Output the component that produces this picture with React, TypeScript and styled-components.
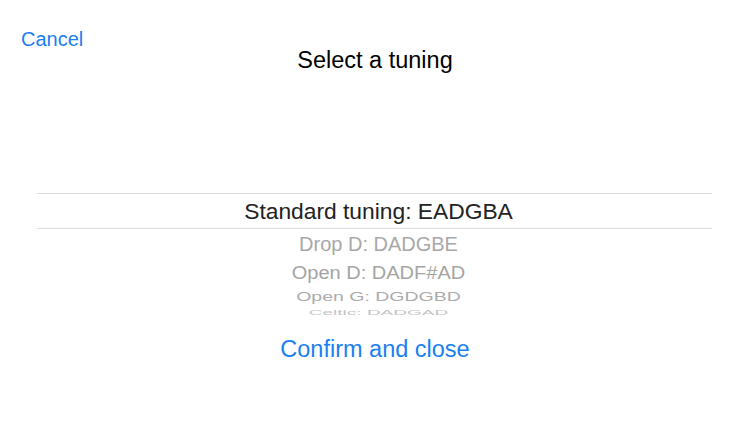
import React from "react";
import styled, { createGlobalStyle } from "styled-components";

const Global = createGlobalStyle`
  html, body { margin: 0; padding: 0; background: #ffffff; }
  body { font-family: "Liberation Sans", Arial, sans-serif; }
`;

const Page = styled.div`
  width: 750px;
  height: 422px;
  display: flex;
  flex-direction: column;
  background: #ffffff;
  overflow: hidden;
`;

const TopBar = styled.div`
  display: flex;
  padding: 29px 21px 0;
`;

const TextButton = styled.button<{ $size: number; $lh: number }>`
  border: none;
  background: none;
  padding: 0;
  margin: 0;
  color: #1a7ff0;
  font-family: "Liberation Sans", Arial, sans-serif;
  font-size: ${(p) => p.$size}px;
  line-height: ${(p) => p.$lh}px;
  cursor: pointer;
`;

const Title = styled.h1`
  margin: 0;
  text-align: center;
  font-weight: 400;
  font-size: 23.5px;
  line-height: 22px;
  color: #000000;
`;

const Picker = styled.div`
  margin: 122px 38px 0 37px;
  display: flex;
  flex-direction: column;
`;

const Band = styled.div`
  border-top: 1px solid #dcdcdc;
  border-bottom: 1px solid #dcdcdc;
  height: 34px;
  padding-left: 8px;
  display: flex;
  align-items: center;
  justify-content: center;
`;

const Selected = styled.span`
  font-size: 22.8px;
  color: #222222;
  line-height: 34px;
`;

const Row = styled.div<{ $h: number }>`
  height: ${(p) => p.$h}px;
  padding-left: 8px;
  display: flex;
  align-items: center;
  justify-content: center;
`;

const RowText = styled.span<{ $scale: number; $color: string; $size: number }>`
  display: inline-block;
  font-size: ${(p) => p.$size}px;
  line-height: 22px;
  color: ${(p) => p.$color};
  transform: scaleY(${(p) => p.$scale});
  white-space: nowrap;
`;

const Footer = styled.div`
  display: flex;
  justify-content: center;
  margin-top: 18px;
`;

const rows = [
  { label: "Drop D: DADGBE", h: 30, scale: 1.03, color: "#a8a8a8", size: 20 },
  { label: "Open D: DADF#AD", h: 28, scale: 0.88, color: "#a4a4a4", size: 20 },
  { label: "Open G: DGDGBD", h: 20, scale: 0.62, color: "#ababab", size: 19.5 },
  { label: "Celtic: DADGAD", h: 12, scale: 0.4, color: "#c4c4c4", size: 19 },
];

export default function App() {
  return (
    <>
      <Global />
      <Page>
        <TopBar>
          <TextButton $size={20} $lh={20}>Cancel</TextButton>
        </TopBar>
        <Title>Select a tuning</Title>
        <Picker>
          <Band>
            <Selected>Standard tuning: EADGBA</Selected>
          </Band>
          {rows.map((r) => (
            <Row key={r.label} $h={r.h}>
              <RowText $scale={r.scale} $color={r.color} $size={r.size}>
                {r.label}
              </RowText>
            </Row>
          ))}
        </Picker>
        <Footer>
          <TextButton $size={23.5} $lh={24}>Confirm and close</TextButton>
        </Footer>
      </Page>
    </>
  );
}
